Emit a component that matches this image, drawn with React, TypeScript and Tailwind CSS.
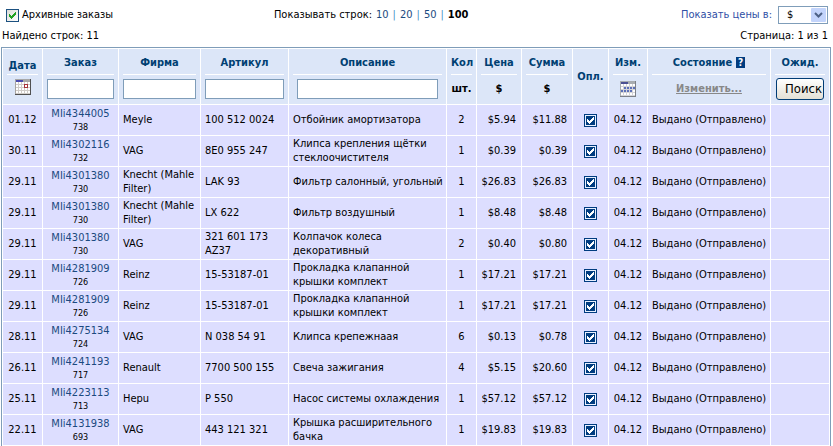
import React from 'react';

interface Order {
  date: string;
  order: string;
  num: string;
  firm: string;
  article: string;
  description: string;
  qty: number;
  price: string;
  sum: string;
}

const orders: Order[] = [
  { date: '01.12', order: 'MIi4344005', num: '738', firm: 'Meyle', article: '100 512 0024', description: 'Отбойник амортизатора', qty: 2, price: '$5.94', sum: '$11.88' },
  { date: '30.11', order: 'MIi4302116', num: '732', firm: 'VAG', article: '8E0 955 247', description: 'Клипса крепления щётки стеклоочистителя', qty: 1, price: '$0.39', sum: '$0.39' },
  { date: '29.11', order: 'MIi4301380', num: '730', firm: 'Knecht (Mahle Filter)', article: 'LAK 93', description: 'Фильтр салонный, угольный', qty: 1, price: '$26.83', sum: '$26.83' },
  { date: '29.11', order: 'MIi4301380', num: '730', firm: 'Knecht (Mahle Filter)', article: 'LX 622', description: 'Фильтр воздушный', qty: 1, price: '$8.48', sum: '$8.48' },
  { date: '29.11', order: 'MIi4301380', num: '730', firm: 'VAG', article: '321 601 173 AZ37', description: 'Колпачок колеса декоративный', qty: 2, price: '$0.40', sum: '$0.80' },
  { date: '29.11', order: 'MIi4281909', num: '726', firm: 'Reinz', article: '15-53187-01', description: 'Прокладка клапанной крышки комплект', qty: 1, price: '$17.21', sum: '$17.21' },
  { date: '29.11', order: 'MIi4281909', num: '726', firm: 'Reinz', article: '15-53187-01', description: 'Прокладка клапанной крышки комплект', qty: 1, price: '$17.21', sum: '$17.21' },
  { date: '28.11', order: 'MIi4275134', num: '724', firm: 'VAG', article: 'N 038 54 91', description: 'Клипса крепежнаая', qty: 6, price: '$0.13', sum: '$0.78' },
  { date: '26.11', order: 'MIi4241193', num: '717', firm: 'Renault', article: '7700 500 155', description: 'Свеча зажигания', qty: 4, price: '$5.15', sum: '$20.60' },
  { date: '25.11', order: 'MIi4223113', num: '713', firm: 'Hepu', article: 'P 550', description: 'Насос системы охлаждения', qty: 1, price: '$57.12', sum: '$57.12' },
  { date: '22.11', order: 'MIi4131938', num: '693', firm: 'VAG', article: '443 121 321', description: 'Крышка расширительного бачка', qty: 1, price: '$19.83', sum: '$19.83' },
];

// Month sheet with a single day marked
const DayIcon = () => (
  <svg width="16" height="16" viewBox="0 0 16 16" shapeRendering="crispEdges">
    <rect width="16" height="16" fill="#d0ccc8" />
    <path d="M1 4h14M1 7h14M1 10h14M1 13h14" stroke="#fff" strokeWidth="2" strokeDasharray="2 1" />
    <rect width="16" height="3" fill="#a8a8a8" />
    <rect x="1" y="1" width="7" height="2" fill="#4a4ab0" />
    <path d="M.5 3v13" stroke="#a8a4a0" />
    <path d="M15.5 0v16M0 15.5h16" stroke="#505050" />
    <rect x="9.5" y="5.5" width="3" height="3" fill="#fff" stroke="#a83238" />
  </svg>
);

// Month sheet with a range of days marked
const RangeIcon = () => (
  <svg width="16" height="16" viewBox="0 0 16 16" shapeRendering="crispEdges">
    <rect width="16" height="16" fill="#d4d4d8" />
    <path d="M1 4h14M1 7h14M1 10h14M1 13h14" stroke="#fff" strokeWidth="2" strokeDasharray="2 1" />
    <path d="M4 7h11M1 10h11" stroke="#5c70b8" strokeWidth="2" strokeDasharray="2 1" />
    <rect width="16" height="3" fill="#a8acb0" />
    <rect x="1" y="1" width="7" height="2" fill="#4c5092" />
    <path d="M.5 3v13" stroke="#a8acb0" />
    <path d="M15.5 0v16M0 15.5h16" stroke="#7c8088" />
  </svg>
);

const PaidCheckbox = ({ label }: { label: string }) => (
  <span className="relative mx-auto block h-[13px] w-[13px]">
    <input
      type="checkbox"
      defaultChecked
      aria-label={label}
      className="block h-[13px] w-[13px] appearance-none border border-[#003c80] bg-[#003c80] shadow-[inset_0_0_0_1px_#e8f0ff]"
    />
    <svg className="pointer-events-none absolute inset-0" width="13" height="13" viewBox="0 0 13 13" shapeRendering="crispEdges">
      <path d="M3 5h1v1h1v1h1v-1h1v-1h1v-1h1v-1h1v3h-1v1h-1v1h-1v1h-1v1h-1v-1h-1v-1h-1z" fill="#fff" />
    </svg>
  </span>
);

interface HeadProps {
  title: React.ReactNode;
  compact?: boolean;
  children: React.ReactNode;
}

const Head = ({ title, compact, children }: HeadProps) => (
  <th scope="col" className="bg-[#dce6f8] px-1 py-0 align-middle font-bold">
    <div className={`border-b border-white leading-4 whitespace-nowrap text-[#003f72] ${compact ? 'h-[17px]' : 'h-5'}`}>
      {title}
    </div>
    <div className={`mt-1 flex items-center justify-center ${compact ? 'h-4' : 'h-5'}`}>{children}</div>
  </th>
);

const FilterInput = ({ label }: { label: string }) => (
  <input type="text" aria-label={label} className="h-5 w-full min-w-0 border border-[#7f9db9] bg-white px-1 font-normal" />
);

const cell = 'bg-[#dddeff] py-0 pl-1';

export default function App() {
  return (
    <div className="bg-white pr-0.5 pl-px font-['DejaVu_Sans_Condensed','DejaVu_Sans',sans-serif] text-[11px] leading-[14px] text-black">
      <div className="flex items-center pt-1.5 pr-[3px]">
        <div className="flex w-[33%] items-center gap-[3px] pl-[5px]">
          <span className="relative block h-[13px] w-[13px]">
            <input
              id="archive"
              type="checkbox"
              defaultChecked
              className="block h-[13px] w-[13px] appearance-none border border-[#1c5180] bg-gradient-to-br from-[#dcdcd7] to-white"
            />
            <svg className="pointer-events-none absolute inset-0" width="13" height="13" viewBox="0 0 13 13" shapeRendering="crispEdges">
              <path d="M3 5h1v1h1v1h1v-1h1v-1h1v-1h1v-1h1v3h-1v1h-1v1h-1v1h-1v1h-1v-1h-1v-1h-1z" fill="#21a121" />
            </svg>
          </span>
          <label htmlFor="archive">Архивные заказы</label>
        </div>
        <div className="flex gap-1 whitespace-nowrap">
          <span>Показывать строк:</span>
          <a href="#10" className="text-[#1b4a80]">10</a>
          <span className="text-[#4a90c8]">|</span>
          <a href="#20" className="text-[#1b4a80]">20</a>
          <span className="text-[#4a90c8]">|</span>
          <a href="#50" className="text-[#1b4a80]">50</a>
          <span className="text-[#4a90c8]">|</span>
          <b>100</b>
        </div>
        <div className="ml-auto flex items-center gap-1.5">
          <label htmlFor="currency" className="text-[#2f4fa5]">Показать цены в:</label>
          <span className="relative block h-[18px] w-[50px]">
            <select
              id="currency"
              className="block h-[18px] w-full appearance-none border border-[#7f9db9] bg-white pl-2 leading-4"
            >
              <option>$</option>
            </select>
            <svg className="pointer-events-none absolute top-0.5 right-0.5" width="15" height="14" viewBox="0 0 15 14">
              <rect width="15" height="14" rx="1" fill="#c3d4fb" />
              <path d="M4 5l3.5 3.5L11 5" fill="none" stroke="#4d6185" strokeWidth="2" />
            </svg>
          </span>
        </div>
      </div>
      <div className="mt-1 flex justify-between pr-[3px] pb-[3px] pl-px leading-4">
        <span>Найдено строк: 11</span>
        <span>Страница: 1 из 1</span>
      </div>

      <table className="w-full table-fixed border-separate border-spacing-px border border-b-0 border-[#7f9db9] bg-white">
        <colgroup>
          <col className="w-[39px]" />
          <col className="w-[75px]" />
          <col className="w-[81px]" />
          <col className="w-[87px]" />
          <col />
          <col className="w-[29px]" />
          <col className="w-[44px]" />
          <col className="w-[50px]" />
          <col className="w-[35px]" />
          <col className="w-[38px]" />
          <col className="w-[122px]" />
          <col className="w-[58px]" />
        </colgroup>
        <thead>
          <tr className="h-[55px]">
            <Head title="Дата" compact>
              <button type="button" aria-label="Выбрать дату"><DayIcon /></button>
            </Head>
            <Head title="Заказ"><FilterInput label="Заказ" /></Head>
            <Head title="Фирма"><FilterInput label="Фирма" /></Head>
            <Head title="Артикул"><FilterInput label="Артикул" /></Head>
            <Head title="Описание">
              <div className="flex w-full px-1"><FilterInput label="Описание" /></div>
            </Head>
            <Head title="Кол">шт.</Head>
            <Head title="Цена">$</Head>
            <Head title="Сумма">$</Head>
            <th scope="col" className="bg-[#dce6f8] p-0 font-bold text-[#003f72]">Опл.</th>
            <Head title="Изм.">
              <button type="button" aria-label="Выбрать период"><RangeIcon /></button>
            </Head>
            <Head
              title={
                <span className="flex items-center justify-center gap-1">
                  Состояние
                  <a href="#help" className="block h-[11px] w-[9px] bg-[#003c80] text-center text-[10px] leading-[11px] text-white">?</a>
                </span>
              }
            >
              <a href="#change" className="text-[#888] underline">Изменить...</a>
            </Head>
            <Head title="Ожид.">
              <button
                type="button"
                className="h-[22px] w-12 shrink-0 overflow-hidden rounded-[3px] border border-[#003c74] bg-gradient-to-b from-white to-[#e3e0d5] pl-2 text-left text-[13px] font-normal whitespace-nowrap"
              >
                Поиск
              </button>
            </Head>
          </tr>
        </thead>
        <tbody>
          {orders.map((o, index) => (
            <tr key={index} className="h-[30px]">
              <td className={`${cell} pr-1 text-center`}>{o.date}</td>
              <td className={`${cell} pr-1 text-center`}>
                <a href={`#${o.order}`} className="block text-[#1b4a80]">{o.order}</a>
                <span className="block text-[9px] leading-3">{o.num}</span>
              </td>
              <td className={`${cell} pr-1`}>{o.firm}</td>
              <td className={`${cell} pr-1`}>{o.article}</td>
              <td className={`${cell} pr-0`}>{o.description}</td>
              <td className={`${cell} pr-1 text-center`}>{o.qty}</td>
              <td className={`${cell} pr-[5px] text-right`}>{o.price}</td>
              <td className={`${cell} pr-[5px] text-right`}>{o.sum}</td>
              <td className={`${cell} pr-1`}><PaidCheckbox label={`Оплачен ${o.order}`} /></td>
              <td className={`${cell} pr-1 text-center`}>04.12</td>
              <td className={`${cell} pr-1 whitespace-nowrap`}>Выдано (Отправлено)</td>
              <td className={`${cell} pr-1`}></td>
            </tr>
          ))}
        </tbody>
      </table>
    </div>
  );
}
